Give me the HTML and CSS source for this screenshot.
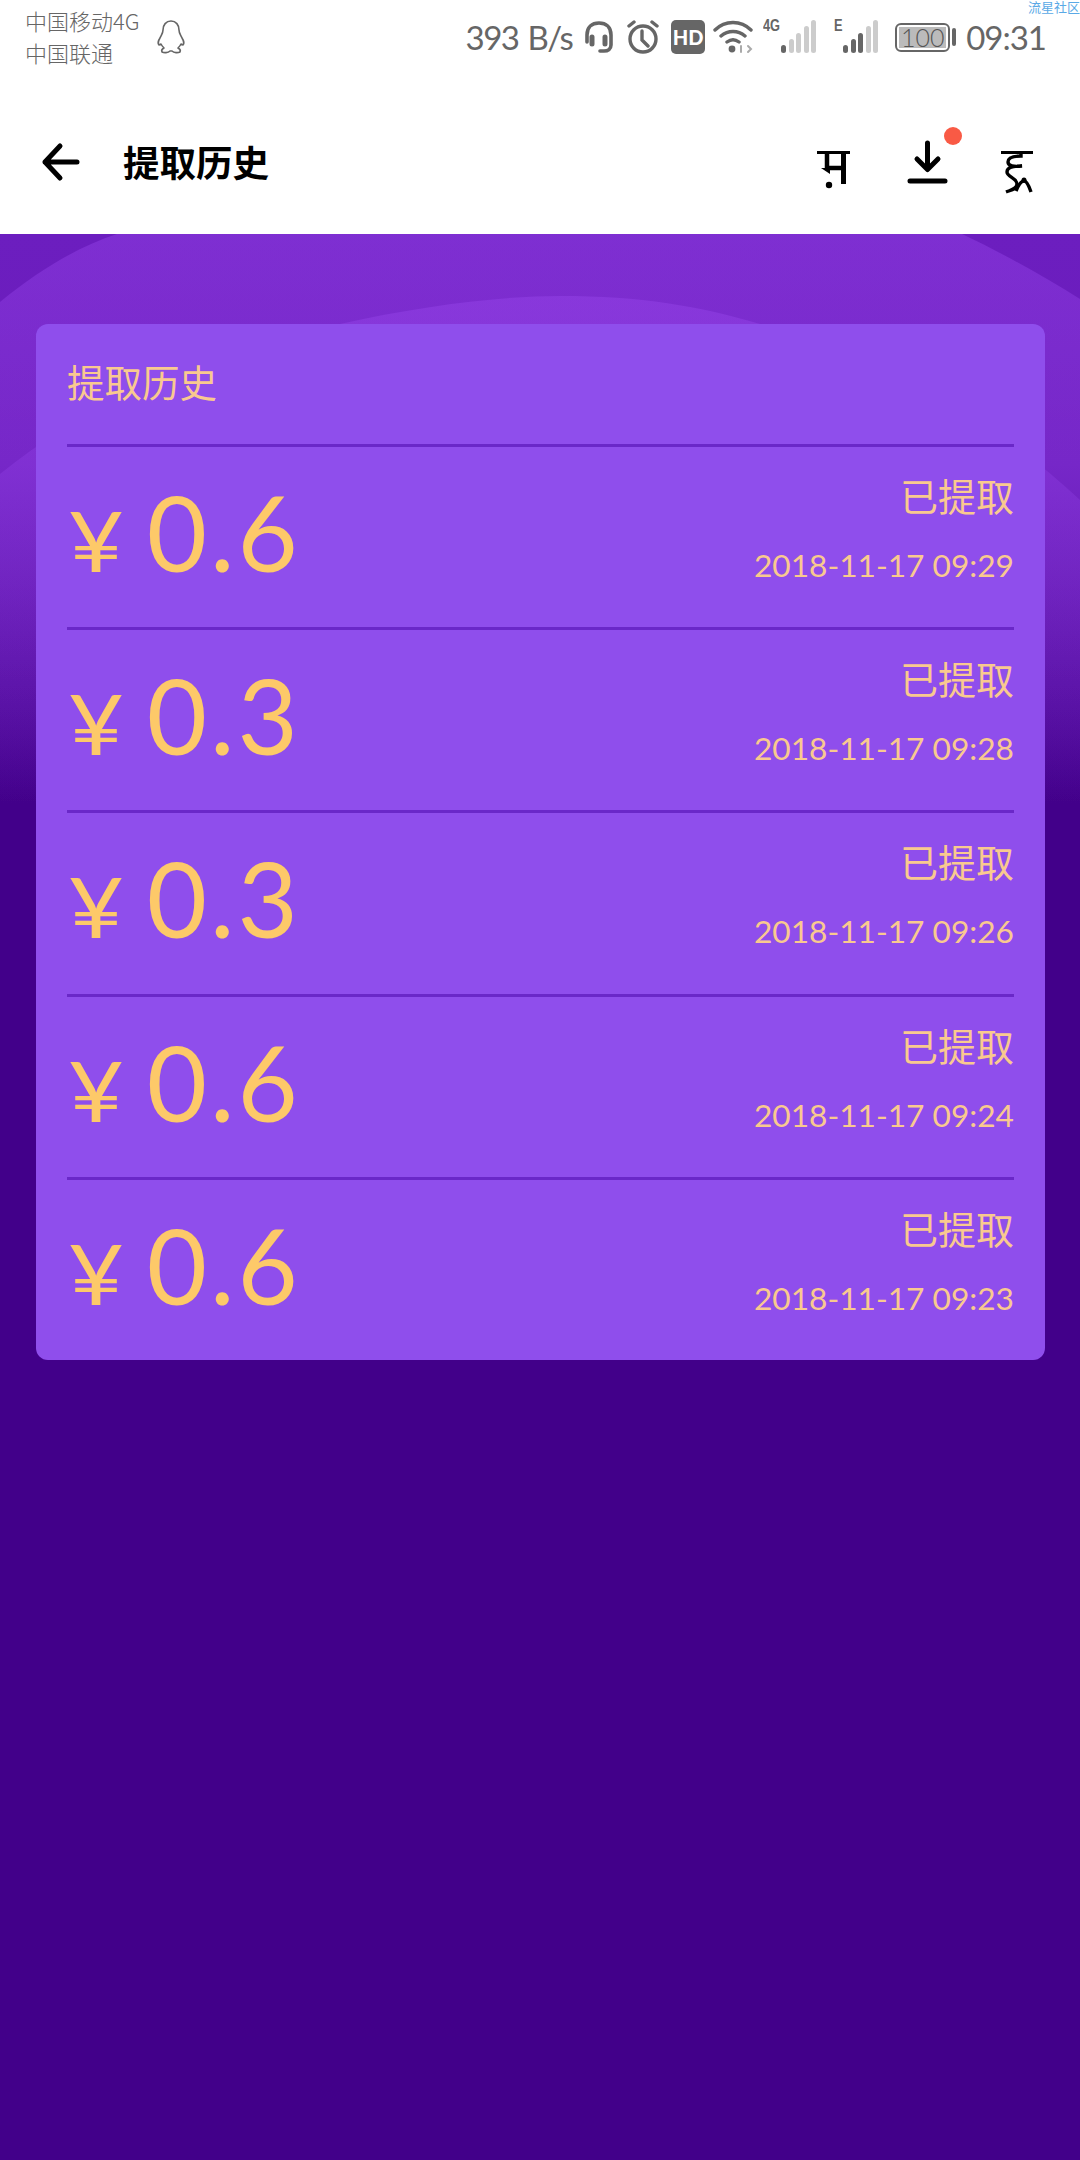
FILE: index.html
```html
<!DOCTYPE html>
<html lang="zh-CN">
<head>
  <meta charset="UTF-8" />
  <meta name="viewport" content="width=device-width, initial-scale=1.0"/>
  <title>提取历史</title>
  <link rel="stylesheet" href="styles.css">
</head>
<body>
  <div class="statusbar">
    <span class="watermark">流星社区</span>
    <div class="carriers">
      <span>中国移动4G</span>
      <span>中国联通</span>
    </div>
    <svg class="qq" width="32" height="36" viewBox="0 0 30 36" fill="none" stroke="#666" stroke-width="1.6" stroke-linejoin="round">
      <path d="M15 2c-5 0-8 4-8 9 0 3-1 4-3 8-2 3-2 6-1 7l2-1c1 2 2 3 3 4-2 1-3 2-2 4 2 1 6 1 8-1h2c2 2 6 2 8 1 1-2 0-3-2-4 1-1 2-2 3-4l2 1c1-1 1-4-1-7-2-4-3-5-3-8 0-5-3-9-8-9z"/>
    </svg>
    <div class="status-right">
      <span class="speed">393 B/s</span>
      <svg width="32" height="34" viewBox="0 0 32 34" fill="none" stroke="#666" stroke-width="3.6" stroke-linecap="round">
        <path d="M4 22V15C4 7 9 3 16 3s12 4 12 12v10c0 4-3 6-7 6h-4"/>
        <path d="M9 17v7M22 17v7" stroke-width="5"/>
      </svg>
      <svg width="34" height="34" viewBox="0 0 34 34" fill="none" stroke="#666" stroke-width="3.4" stroke-linecap="round">
        <circle cx="17" cy="19" r="13"/>
        <path d="M16 11v9l6 6M3 6l5-4M31 6l-5-4"/>
      </svg>
      <span class="hd">HD</span>
      <svg width="40" height="34" viewBox="0 0 40 34" fill="none" stroke="#666" stroke-width="3.4" stroke-linecap="round">
        <path d="M2 10C12 0 28 0 38 10M8 16c7-6 17-6 24 0M14 22c4-3 8-3 12 0"/>
        <circle cx="19" cy="29" r="3.4" fill="#666" stroke="none"/>
        <path d="M28 32v-6M35 32l3-3-3-3" stroke-width="2" stroke="#aaa"/>
      </svg>
      <div class="signal first">
        <span class="net">4G</span>
        <div class="bars">
          <i class="on"></i><i></i><i></i><i></i><i></i>
        </div>
      </div>
      <div class="signal">
        <span class="net net-e">E</span>
        <div class="bars">
          <i class="on"></i><i class="on"></i><i class="on"></i><i></i><i></i>
        </div>
      </div>
      <div class="battery"><span>100</span></div>
      <span class="battery-nub"></span>
      <span class="time">09:31</span>
    </div>
  </div>

  <div class="toolbar">
    <svg class="back" width="40" height="40" viewBox="0 0 40 40" fill="none" stroke="#000" stroke-width="5" stroke-linecap="round" stroke-linejoin="round">
      <path d="M37 20H5M20 4L5 20l15 16"/>
    </svg>
    <h1>提取历史</h1>
    <div class="tools">
      <svg width="60" height="60" viewBox="0 0 60 60" fill="none" stroke="#000">
        <path d="M12 12.5h33" stroke-width="3"/>
        <path d="M22 12v17M20 28h18" stroke-width="4.5"/>
        <path d="M38.5 12v32" stroke-width="5"/>
        <path d="M16 28l9 0 0 6z" fill="#000" stroke="none"/>
        <circle cx="24" cy="45" r="3.2" fill="#000" stroke="none"/>
      </svg>
      <div class="download">
        <svg width="41" height="44" viewBox="0 0 41 44" fill="none" stroke="#000" stroke-width="5" stroke-linecap="round" stroke-linejoin="round">
          <path d="M20.500 3v26M10 19l10.500 10.500L31 19M3 41h35"/>
        </svg>
        <span class="dot"></span>
      </div>
      <svg width="60" height="60" viewBox="0 0 60 60" fill="none" stroke="#000" stroke-width="3.4">
        <path d="M11 12.500h32" stroke-width="3"/>
        <path d="M31 13v3c-6 0-13 1-13 6 0 4 6 5 14 4-8 0-15 1-15 6 0 5 10 6 10 12 0 5-6 6-11 8"/>
        <path d="M26 51c2-5 5-10 8-10 3 0 5 5 7 11"/>
        <circle cx="34" cy="40" r="2.500" fill="#000" stroke="none"/>
      </svg>
    </div>
  </div>

  <div class="main">
    <svg class="waves" width="1080" height="570" viewBox="0 0 1080 570">
      <defs>
        <linearGradient id="fade" x1="0" y1="0" x2="0" y2="1">
          <stop offset="0" stop-color="#9a48ee" stop-opacity=".4"/>
          <stop offset=".6" stop-color="#9a48ee" stop-opacity=".18"/>
          <stop offset="1" stop-color="#9a48ee" stop-opacity="0"/>
        </linearGradient>
      </defs>
      <path fill="url(#fade)" d="M0 68C40 35 80 12 117 0H962C1000 18 1040 40 1080 65V570H0z"/>
      <path fill="url(#fade)" d="M0 240C100 160 220 110 340 90 420 72 500 62 560 62 640 62 700 72 760 90 880 120 1000 190 1080 266V570H0z"/>
    </svg>
    <div class="card">
      <div class="card-title">提取历史</div>

      <div class="record">
        <div class="amount"><span class="yen">¥</span>0.6</div>
        <div class="info">
          <span class="state">已提取</span>
          <span class="date">2018-11-17 09:29</span>
        </div>
      </div>
      <div class="record">
        <div class="amount"><span class="yen">¥</span>0.3</div>
        <div class="info">
          <span class="state">已提取</span>
          <span class="date">2018-11-17 09:28</span>
        </div>
      </div>
      <div class="record">
        <div class="amount"><span class="yen">¥</span>0.3</div>
        <div class="info">
          <span class="state">已提取</span>
          <span class="date">2018-11-17 09:26</span>
        </div>
      </div>
      <div class="record">
        <div class="amount"><span class="yen">¥</span>0.6</div>
        <div class="info">
          <span class="state">已提取</span>
          <span class="date">2018-11-17 09:24</span>
        </div>
      </div>
      <div class="record">
        <div class="amount"><span class="yen">¥</span>0.6</div>
        <div class="info">
          <span class="state">已提取</span>
          <span class="date">2018-11-17 09:23</span>
        </div>
      </div>
    </div>
  </div>
</body>
</html>
```

FILE: styles.css
```css
* {
  box-sizing: border-box;
}

body {
  font-family: Lato, 'Noto Sans CJK SC', sans-serif;
  margin: 0;
  padding: 0;
  width: 1080px;
  height: 2160px;
  overflow: hidden;
  background: #42008a;
  display: flex;
  flex-direction: column;
}

.statusbar {
  position: relative;
  height: 70px;
  display: flex;
  align-items: flex-start;
  padding: 8px 34px 0 25px;
  background: white;
  color: #666;
}

.watermark {
  position: absolute;
  top: -3px;
  right: 0;
  font-size: 13px;
  color: #5aa9e6;
}

.carriers {
  display: flex;
  flex-direction: column;
  gap: 7px;
  font-size: 22px;
  line-height: 25px;
  font-family: 'Noto Sans CJK SC', sans-serif;
  font-weight: 300;
}

.qq {
  margin: 11px 0 0 15px;
}

.status-right {
  margin-left: auto;
  display: flex;
  align-items: center;
  height: 54px;
  margin-top: 2px;
}

.speed {
  font-size: 33px;
  font-weight: 400;
  word-spacing: 2px;
  letter-spacing: -1.5px;
  margin-right: 11px;
}

.status-right svg {
  margin-right: 11px;
}

.hd {
  width: 34px;
  height: 34px;
  background: #666;
  color: white;
  border-radius: 5px;
  font-size: 20px;
  font-weight: 900;
  line-height: 34px;
  text-align: center;
  margin-right: 8px;
}

.signal {
  display: flex;
  align-items: flex-start;
  height: 36px;
  margin-right: 17px;
}

.signal.first {
  margin-right: 18px;
  margin-left: -1px;
}

.net {
  width: 18px;
  font-family: 'Liberation Sans', sans-serif;
  font-size: 16px;
  font-weight: bold;
  line-height: 16px;
  transform: scaleX(0.8);
  transform-origin: left;
  margin-top: -1px;
}

.net-e {
  width: 9px;
}

.bars {
  display: flex;
  align-items: flex-end;
  gap: 2.500px;
  height: 34px;
}

.bars i {
  width: 5px;
  background: #ccc;
  border-radius: 3px;
}

.bars i.on {
  background: #666;
}

.bars i:nth-child(1) { height: 8px; }
.bars i:nth-child(2) { height: 14px; }
.bars i:nth-child(3) { height: 20px; }
.bars i:nth-child(4) { height: 27px; }
.bars i:nth-child(5) { height: 33px; }

.battery {
  width: 55px;
  height: 29px;
  border: 2px solid #666;
  border-radius: 6px;
  padding: 2px;
}

.battery span {
  display: block;
  height: 100%;
  background: #bbb;
  font-size: 25px;
  font-weight: 300;
  line-height: 21px;
  text-align: center;
  color: #555;
}

.battery-nub {
  width: 4px;
  height: 18px;
  background: #666;
  border-radius: 2px;
  margin: 0 10px 0 2px;
}

.time {
  font-size: 33px;
  font-weight: 400;
  letter-spacing: -1px;
}

.toolbar {
  height: 164px;
  display: flex;
  align-items: center;
  padding: 20px 0 0 40px;
  background: white;
}

.toolbar h1 {
  margin: -2px 0 0 43px;
  font-size: 36.500px;
  font-weight: 700;
  font-family: 'Noto Sans CJK SC', sans-serif;
  color: black;
}

.tools {
  margin-left: auto;
  display: flex;
  align-items: flex-start;
  gap: 42px;
  padding: 16px 30px 0 0;
}

.download {
  position: relative;
  width: 41px;
  height: 44px;
}

.download svg {
  display: block;
}

.dot {
  position: absolute;
  top: -13px;
  right: -14px;
  width: 18px;
  height: 18px;
  border-radius: 50%;
  background: #f95a45;
}

.main {
  position: relative;
  flex: 1;
  padding: 90px 35px 0 36px;
  background: linear-gradient(#6c1ebf 0, #6a1cbb 230px, #42008a 570px);
}

.waves {
  position: absolute;
  top: 0;
  left: 0;
}

.card {
  position: relative;
  height: 1036px;
  padding: 0 31px;
  background: #8f4eec;
  border-radius: 12px;
}

.card-title {
  height: 120px;
  padding-top: 31px;
  font-size: 37.500px;
  line-height: 52px;
  font-family: 'Noto Sans CJK SC', sans-serif;
  font-weight: 400;
  color: #f9c98f;
}

.record {
  height: 183.2px;
  display: flex;
  justify-content: space-between;
  align-items: flex-start;
  border-top: 3px solid #6a28c8;
}

.amount {
  display: flex;
  align-items: baseline;
  padding-top: 20px;
  font-size: 104px;
  line-height: 130px;
  font-weight: 400;
  letter-spacing: 3px;
  color: #fdc969;
}

.yen {
  font-size: 84px;
  transform: scaleX(1.15);
  transform-origin: left;
  margin: 0 27px 0 1px;
}

.info {
  display: flex;
  flex-direction: column;
  align-items: flex-end;
  padding-top: 24px;
  color: #f9c98f;
}

.state {
  font-size: 38px;
  line-height: 48px;
  font-family: 'Noto Sans CJK SC', sans-serif;
  font-weight: 400;
}

.date {
  margin-top: 27px;
  font-size: 31.700px;
  line-height: 38px;
  font-weight: 400;
}
```
